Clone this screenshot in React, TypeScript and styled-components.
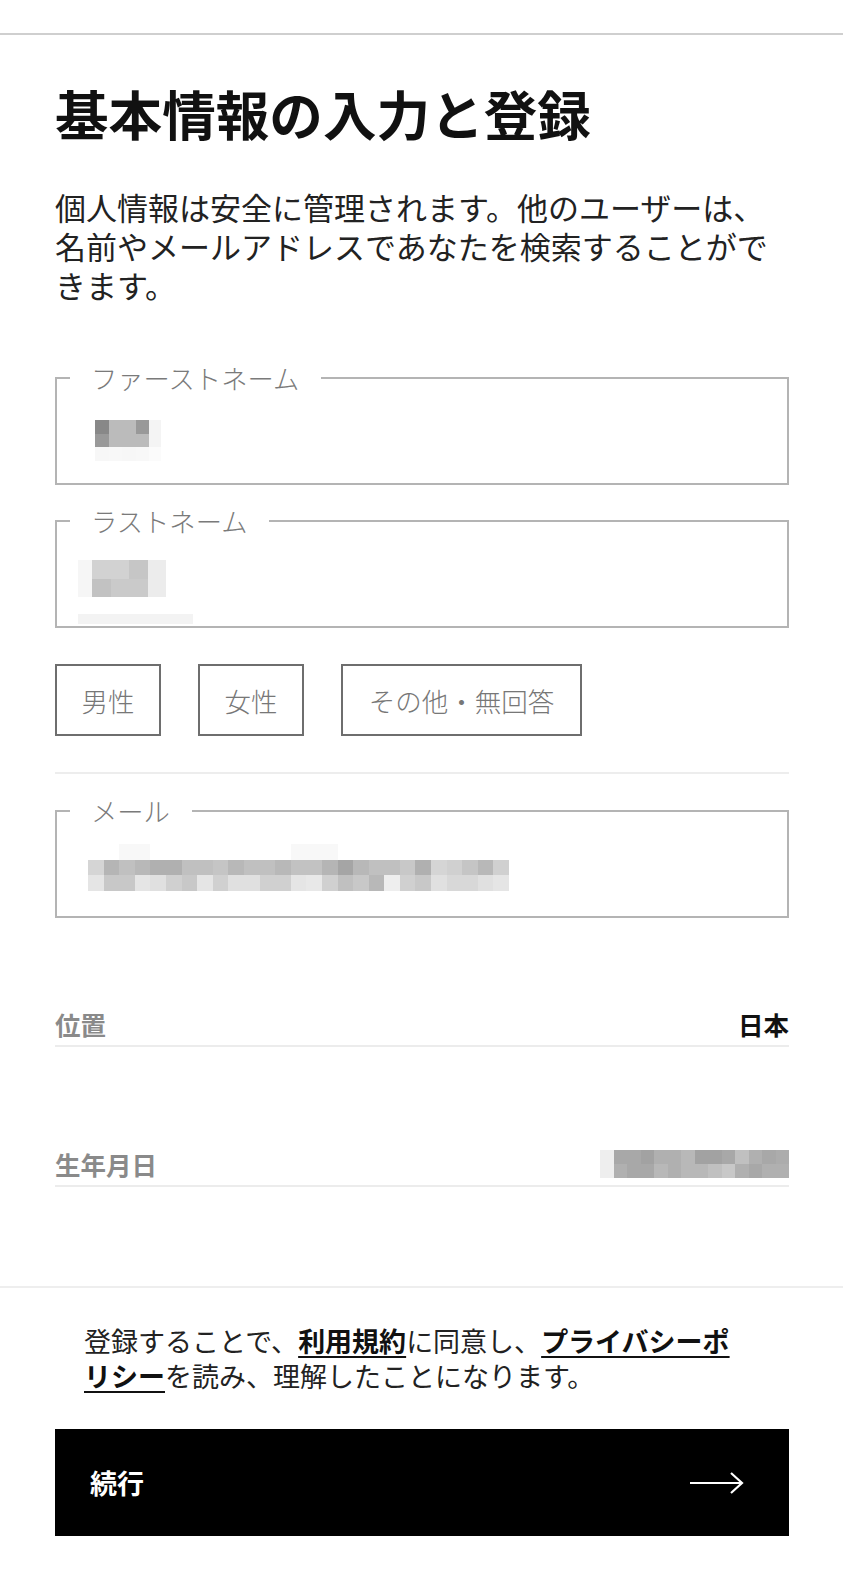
import React from "react";
import styled, { createGlobalStyle } from "styled-components";

const GlobalStyle = createGlobalStyle`
  html, body {
    margin: 0;
    padding: 0;
    background: #ffffff;
  }
  body {
    font-family: "Noto Sans CJK JP", "Noto Sans", sans-serif;
    color: #111;
  }
  * { box-sizing: border-box; }
`;

const Page = styled.div`
  width: 843px;
  min-height: 1571px;
  background: #fff;
`;

const TopBar = styled.div`
  height: 35px;
  border-bottom: 2px solid #cfcfcf;
`;

const Main = styled.main`
  padding: 0 54px 0 55px;
  display: flex;
  flex-direction: column;
`;

const Title = styled.h1`
  margin: 47px 0 0;
  font-size: 53.6px;
  line-height: 62px;
  font-weight: 700;
  color: #111;
`;

const Intro = styled.p`
  margin: 43px 0 0;
  font-size: 31px;
  line-height: 39px;
  color: #222;
  width: 732px;
`;

const Field = styled.fieldset<{ $mt: number }>`
  margin: ${(p) => p.$mt}px 0 0;
  padding: 0;
  border: 2px solid #b4b4b4;
  min-width: 0;
`;

const Legend = styled.legend`
  margin-left: 13px;
  padding: 0 22px 0 21px;
  font-size: 26.3px;
  line-height: 26px;
  font-weight: 300;
  color: #7a7a7a;
`;

const InputArea = styled.div`
  height: 92px;
  display: flex;
  flex-direction: column;
  align-items: flex-start;
`;

const Mosaic = styled.div<{ $cols: string; $rowH: number; $ml: number; $mt: number }>`
  display: grid;
  grid-template-columns: ${(p) => p.$cols};
  grid-auto-rows: ${(p) => p.$rowH}px;
  margin-left: ${(p) => p.$ml}px;
  margin-top: ${(p) => p.$mt}px;
  filter: blur(0.6px);
`;

const Cell = styled.span`
  display: block;
`;

const Smudge = styled.div<{ $w: number; $ml: number; $mt: number }>`
  width: ${(p) => p.$w}px;
  height: 10px;
  margin-left: ${(p) => p.$ml}px;
  margin-top: ${(p) => p.$mt}px;
  background: #f3f3f3;
`;

const GenderRow = styled.div`
  margin-top: 36px;
  display: flex;
  gap: 37px;
`;

const GenderButton = styled.button<{ $w: number }>`
  width: ${(p) => p.$w}px;
  height: 72px;
  border: 2px solid #6e6e6e;
  background: #fff;
  padding: 0;
  font-family: inherit;
  font-size: 26.5px;
  font-weight: 300;
  color: #777;
  display: flex;
  align-items: center;
  justify-content: center;
`;

const Divider = styled.hr`
  margin: 36px 0 0;
  border: none;
  border-top: 2px solid #ededed;
  height: 0;
`;

const InfoRow = styled.div<{ $mt: number }>`
  margin-top: ${(p) => p.$mt}px;
  display: flex;
  align-items: center;
  justify-content: space-between;
  height: 34px;
  border-bottom: 2px solid #ececec;
  padding-bottom: 4px;
  box-sizing: content-box;
`;

const InfoLabel = styled.span`
  font-size: 25.5px;
  line-height: 30px;
  font-weight: 700;
  color: #8a8a8a;
`;

const InfoValue = styled.span`
  font-size: 25.5px;
  line-height: 30px;
  font-weight: 700;
  color: #111;
`;

const Footer = styled.footer`
  margin-top: 99px;
  border-top: 2px solid #eeeeee;
  padding: 35px 54px 38px 55px;
  display: flex;
  flex-direction: column;
`;

const Terms = styled.p`
  margin: 0 0 0 29px;
  width: 662px;
  font-size: 27px;
  line-height: 35px;
  color: #222;
`;

const TermsLink = styled.a`
  color: #111;
  font-weight: 700;
  text-decoration: underline;
  text-decoration-thickness: 2px;
  text-underline-offset: 4px;
`;

const ContinueButton = styled.button`
  margin-top: 36px;
  width: 734px;
  height: 107px;
  background: #000;
  border: none;
  padding: 0 44px 0 35px;
  display: flex;
  align-items: center;
  justify-content: space-between;
  font-family: inherit;
  font-size: 27px;
  font-weight: 700;
  color: #fff;
`;

type MosaicData = {
  cols: number[];
  rowH: number;
  rows: string[][];
  ml: number;
  mt: number;
};

function PixelMosaic({ data }: { data: MosaicData }) {
  return (
    <Mosaic
      $cols={data.cols.map((c) => `${c}px`).join(" ")}
      $rowH={data.rowH}
      $ml={data.ml}
      $mt={data.mt}
    >
      {data.rows.flatMap((row, r) =>
        row.map((c, i) => <Cell key={`${r}-${i}`} style={{ background: `#${c}${c}${c}` }} />)
      )}
    </Mosaic>
  );
}

const firstName: MosaicData = {
  cols: [13.5, 13.5, 13.5, 13.5, 12],
  rowH: 13.5,
  ml: 38,
  mt: 29,
  rows: [
    ["88", "bb", "bb", "99", "f4"],
    ["99", "bb", "bb", "bb", "f4"],
    ["f7", "f8", "f7", "f8", "fb"],
  ],
};

const lastName: MosaicData = {
  cols: [14, 18.5, 18.5, 18.5, 18],
  rowH: 18.5,
  ml: 21,
  mt: 26,
  rows: [
    ["f6", "d2", "d2", "c6", "ec"],
    ["f6", "c2", "ca", "ca", "ec"],
  ],
};

const emailRow1 = ["d5", "b5", "c0", "b8", "b0", "b0", "c0", "c0", "c5", "b8", "c0", "c0", "b8", "c2", "c2", "b5", "a5", "b8", "c0", "c0", "c8", "b0", "d5", "d0", "c5", "b8", "d0"];
const emailRow2 = ["e5", "c8", "c8", "e5", "e0", "d0", "c8", "e5", "d0", "e0", "e0", "d0", "d0", "e5", "e8", "d0", "c0", "c8", "b8", "ee", "d0", "c8", "e0", "d8", "d8", "e0", "e5"];
const emailRow0 = emailRow1.map((_, i) => (i === 2 || i === 3 || i === 13 || i === 14 || i === 15 ? "f8" : "ff"));

const email: MosaicData = {
  cols: Array(27).fill(15.6),
  rowH: 15.5,
  ml: 31,
  mt: 20,
  rows: [emailRow0, emailRow1, emailRow2],
};

const birthday: MosaicData = {
  cols: [14, ...Array(13).fill(13.5)],
  rowH: 14,
  ml: 0,
  mt: 0,
  rows: [
    ["ee", "a8", "a8", "a2", "b0", "b0", "b8", "a2", "a2", "a8", "c0", "b0", "a8", "ac"],
    ["ee", "b0", "a8", "a8", "b8", "b0", "b8", "b8", "c0", "c8", "b0", "a8", "b0", "b0"],
  ],
};

function ArrowIcon() {
  return (
    <svg width="56" height="24" viewBox="0 0 56 24" fill="none">
      <path d="M1 12 H53" stroke="#fff" strokeWidth="2.2" />
      <path d="M42 2 L53 12 L42 22" stroke="#fff" strokeWidth="2.2" strokeLinejoin="miter" />
    </svg>
  );
}

export default function App() {
  return (
    <Page>
      <GlobalStyle />
      <TopBar />
      <Main>
        <Title>基本情報の入力と登録</Title>
        <Intro>
          個人情報は安全に管理されます。他のユーザーは、名前やメールアドレスであなたを検索することができます。
        </Intro>

        <Field $mt={61}>
          <Legend>ファーストネーム</Legend>
          <InputArea>
            <PixelMosaic data={firstName} />
          </InputArea>
        </Field>

        <Field $mt={23}>
          <Legend>ラストネーム</Legend>
          <InputArea>
            <PixelMosaic data={lastName} />
            <Smudge $w={115} $ml={21} $mt={17} />
          </InputArea>
        </Field>

        <GenderRow>
          <GenderButton $w={106}>男性</GenderButton>
          <GenderButton $w={106}>女性</GenderButton>
          <GenderButton $w={241}>その他・無回答</GenderButton>
        </GenderRow>

        <Divider />

        <Field $mt={24}>
          <Legend>メール</Legend>
          <InputArea>
            <PixelMosaic data={email} />
          </InputArea>
        </Field>

        <InfoRow $mt={89}>
          <InfoLabel>位置</InfoLabel>
          <InfoValue>日本</InfoValue>
        </InfoRow>

        <InfoRow $mt={100}>
          <InfoLabel>生年月日</InfoLabel>
          <PixelMosaic data={birthday} />
        </InfoRow>
      </Main>

      <Footer>
        <Terms>
          登録することで、<TermsLink>利用規約</TermsLink>に同意し、
          <TermsLink>プライバシーポリシー</TermsLink>を読み、理解したことになります。
        </Terms>
        <ContinueButton>
          <span>続行</span>
          <ArrowIcon />
        </ContinueButton>
      </Footer>
    </Page>
  );
}
